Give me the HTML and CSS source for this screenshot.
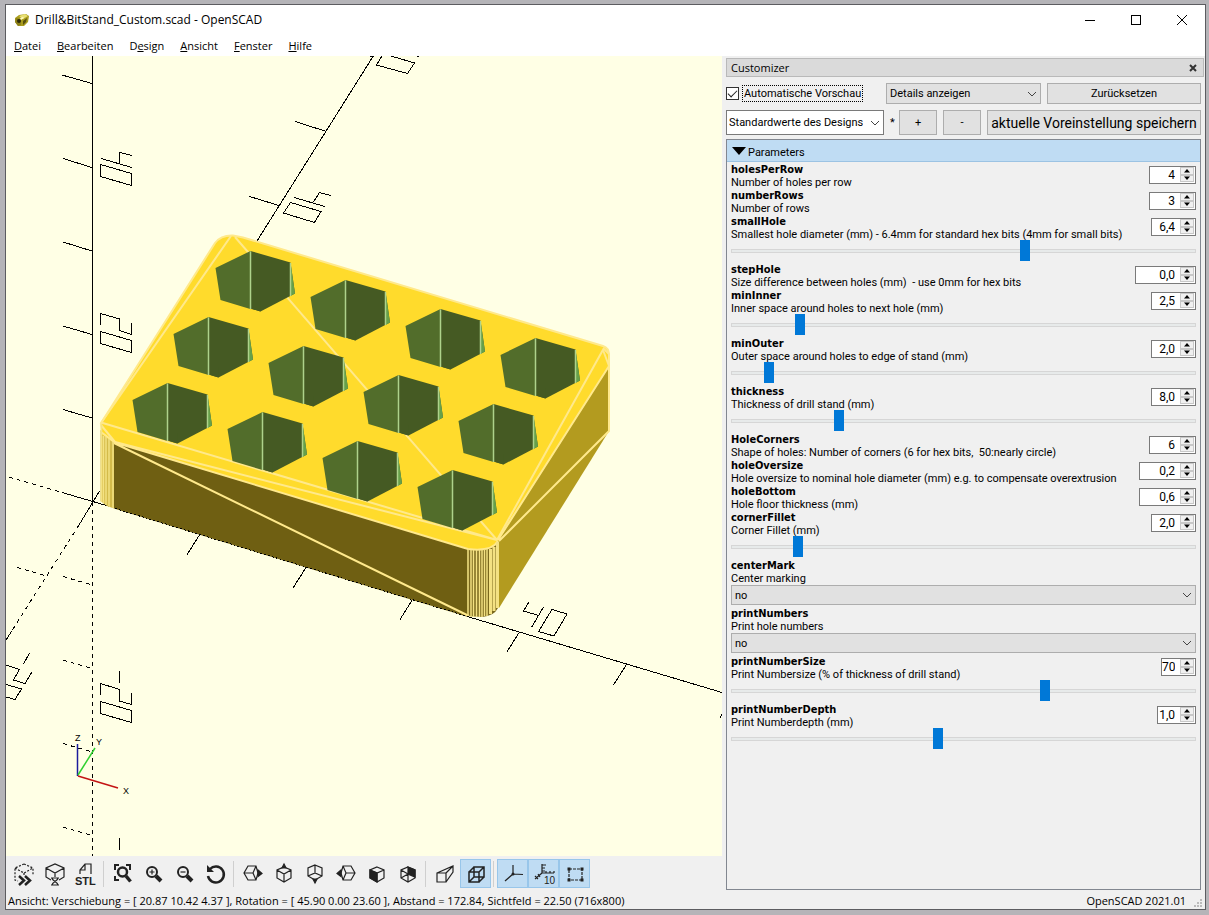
FILE: index.html
```html
<!DOCTYPE html>
<html lang="de">
<head>
<meta charset="utf-8">
<title>Drill&amp;BitStand_Custom.scad - OpenSCAD</title>
<link rel="stylesheet" href="styles.css">
</head>
<body>
<svg class="defs" aria-hidden="true">
  <defs>
    <symbol id="chevron" viewBox="0 0 10 6"><path d="M1 1l4 4 4-4" fill="none" stroke="#444"/></symbol>
    <symbol id="up" viewBox="0 0 6 4"><path d="M3 0l3 3.5H0z"/></symbol>
    <symbol id="down" viewBox="0 0 6 4"><path d="M3 4l3-3.5H0z"/></symbol>
  </defs>
</svg>
<div class="window">
  <header class="titlebar">
    <svg class="app-icon" viewBox="0 0 16 14"><path d="M1 5l4-3 7-1 3 2-1 6-4 4-6 0-3-4z" fill="#a99c1e"/><path d="M5 3l6-2 3 2-5 3z" fill="#e8df72"/><path d="M2 5l4 1 1 6-3 1-3-4z" fill="#8c8018"/><circle cx="5" cy="8" r="2" fill="#2e2a08"/><path d="M9 8l4-3-1 4-3 3z" fill="#57500f"/><path d="M6 5l3-1 1 1-3 2z" fill="#fffbc0"/></svg>
    <h1 class="title">Drill&amp;BitStand_Custom.scad - OpenSCAD</h1>
    <div class="caption-buttons">
      <button class="caption" aria-label="Minimieren"><svg viewBox="0 0 12 12"><path d="M1 6.5h10"/></svg></button>
      <button class="caption" aria-label="Maximieren"><svg viewBox="0 0 12 12"><path d="M1.500 1.500h9v9h-9z"/></svg></button>
      <button class="caption" aria-label="Schließen"><svg viewBox="0 0 12 12"><path d="M1 1l10 10M11 1L1 11" shape-rendering="auto"/></svg></button>
    </div>
  </header>
  <nav class="menubar">
    <a href="#"><u>D</u>atei</a><a href="#"><u>B</u>earbeiten</a><a href="#">D<u>e</u>sign</a><a href="#"><u>A</u>nsicht</a><a href="#"><u>F</u>enster</a><a href="#"><u>H</u>ilfe</a>
  </nav>
  <div class="work">
    <main class="editor">
      <svg class="scene" viewBox="6 56 716 800" preserveAspectRatio="xMinYMin slice" role="img" aria-label="3D-Ansicht">
        <defs>
          <g id="hole">
            <path d="M0 0l40 11.500 4.500 31-34.500 18-10-3z" fill="#455a23"/>
            <path d="M0 0v58l10 3-40-12-5-32z" fill="#526d2b"/>
            <path d="M10 60.500l-10-3V50h10z" fill="#455a23"/>
            <path d="M40 11.500l4.500 31-4.500 2.500z" fill="#67a04a"/>
            <path d="M0 .5v57.500M40 12v33" stroke="#aed28b" stroke-width="1.500"/>
          </g>
        </defs>
        <g class="axis">
          <path d="M92.500 56V502"/>
          <path d="M62 75l30 8.500M63 158.500l29 9M63 242l29 9M63 326l29 8.500M63 409.500l29 8.500"/>
          <path d="M257 241L373 56.500h-3M295 121.500l30 9.500M249.500 196.500l29.500 9"/>
          <path d="M99.500 491L79 525M62 492.500l53 15.500M469 617l253 75.500"/>
          <path d="M199.500 535l-13 20.500M306 567.500l-13 20.500M412.500 599.500l-12.500 20M519.500 632l-13 20.500M626.500 664.500l-13 20.500M722 714.500l-2 3"/>
          <path d="M92.500 502V856" stroke-dasharray="4 4"/>
          <path d="M63 576.500l29 8.500M63 660l29 8.500M63 743.500l29 8.500M63 827l29 8.500M17 567.500l28 8M9 477l53 15.500M79 525L6 640" stroke-dasharray="4 4"/>
          <path d="M100.500 164.500l31 9v12l-31-9zM101 158.500l31 9M119.500 164v-11.500l12.500 3"/>
          <path d="M100.500 324.500v-11l19 5.500v11.500l12 4v-12M100.500 331.500l31 9v12l-31-9z"/>
          <path d="M119.500 671v11.500M100.500 694.500v-11l19 6v11.500l12 3.500v-11.500M100.500 701.500l31 9v12l-31-9zM119.500 838v11.500"/>
          <path d="M29.500 653l-6 11M6 665l13.500 4.500-6 10.500 11.500 3.500 7-11.500M6 684.500l15.500 4.500-6.500 10.500-9-2.500M11.500 631.500L6 640"/>
          <path d="M294 197.500l31 9M313.500 202l6-9.500 11.500 3M290.500 202.500l30.500 9-6.500 11-31-9.500z"/>
          <path d="M382 56l-5.500 9 31 8.500 7-10.500-23.500-7M417 57l2-1"/>
          <path d="M529 602l-5.500 9 15.500 4.500M543.500 607l-12 20.500M552 609.500l15 4.500-13 22-15.500-4.500z"/>
        </g>
        <path d="M114 442L468 548V617L114 508.500z" fill="#6f5f12"/>
        <path d="M497 540L609 362V431L499 608z" fill="#b39b1f"/>
        <path d="M100.500 430L114 441V508.500L107 506 100.500 501z" fill="#d3bb4a"/>
        <path d="M467 547L498 540V608q-4 8-16 9l-15-1z" fill="#7a681c"/>
        <path d="M100.500 424L215 243Q221 235 233 235.500L243 237.500 603 346Q609 348 609.500 355V366L498 541Q494 549 480 550L468 549 114 442.500 101 434z" fill="#ffdb2c"/>
        <g class="edges">
          <path d="M100.500 424L215 243Q221 235 233 235.500L243 237.500 603 346Q609 348 609 355V431L499 541M498 540L609 366"/>
          <path d="M231 236L101 423M235 237L497 540M604 348L497 540M497 540L101 422.500M115 442L497 540M101 425l14 17M609 354l-6-6"/>
          <path d="M101 432L115 442.500 468 549Q492 552 498 541M114 443L469 616"/>
          <path d="M609 366l-6-16"/>
        </g>
        <g class="ribs">
          <path d="M101.500 424V502M103.500 436V503M106 437V505M109 439V507M113 442V508"/>
          <path d="M468 549V616M471 550V617M473.500 550V617M476.500 550V617M479.500 550V617M482 550V617M484.500 549V616M487 549V616"/>
        </g>
        <path d="M490.500 549V614M494 547V611M497.500 542V608" stroke="#f4e283" stroke-width="3"/>
        <g>
          <use href="#hole" x="250.500" y="251"/><use href="#hole" x="345.500" y="280"/><use href="#hole" x="440.500" y="309"/><use href="#hole" x="535.500" y="338"/>
          <use href="#hole" x="208.500" y="317"/><use href="#hole" x="303.500" y="346"/><use href="#hole" x="398.500" y="375"/><use href="#hole" x="493.500" y="404"/>
          <use href="#hole" x="167.500" y="383"/><use href="#hole" x="262.500" y="412"/><use href="#hole" x="357.500" y="441"/><use href="#hole" x="452.500" y="470"/>
        </g>
        <path d="M115 508.500L469 617" class="axis" stroke-dasharray="2 2"/>
        <path d="M77.500 776V744" stroke="#1c1c9c" stroke-width="1.500"/>
        <path d="M78 775L95 748" stroke="#2fd02f" stroke-width="1.500"/>
        <path d="M78 776L118 788" stroke="#c41414" stroke-width="1.500"/>
        <g class="axis-names"><text x="75" y="741">Z</text><text x="96" y="745">Y</text><text x="123" y="794">X</text></g>
      </svg>
      <div class="toolbar" role="toolbar">
        <button class="tool" aria-label="Vorschau"><svg viewBox="0 0 24 24"><path d="M12 2l9 4v7M12 2L3 6v12l3 1M3 6l9 5 9-5M12 11v2" stroke-dasharray="2 1.500"/><path d="M7 14l5 4.500L7 23M13 14l5 4.500-5 4.500" stroke-width="2.500"/></svg></button>
        <button class="tool" aria-label="Rendern"><svg viewBox="0 0 24 24"><path d="M8 18l-5-3V6l9-4 9 4v9l-5 3M3 6l9 5 9-5M12 11v4M8 16h8M8 23h8M9 16c0 3 6 4 6 7M15 16c0 3-6 4-6 7"/></svg></button>
        <button class="tool" aria-label="STL exportieren"><svg viewBox="0 0 24 24"><path d="M6 12V8l5-6h6v10M11 2v6H6"/><text class="stl" x="1" y="23">STL</text></svg></button>
        <span class="sep"></span>
        <button class="tool" aria-label="Alles zeigen"><svg viewBox="0 0 24 24"><path d="M4 8V3h4M15 3h4v5M4 14v4h4" stroke-width="2"/><circle cx="11.500" cy="10" r="4.500" stroke-width="2.500"/><path d="M15 14l4.500 5.500" stroke-width="3.500"/></svg></button>
        <button class="tool" aria-label="Vergrößern"><svg viewBox="0 0 24 24"><circle cx="10" cy="10" r="5" stroke-width="2"/><path d="M14 14l5 5" stroke-width="4"/><path d="M7.500 10h5M10 7.500v5"/></svg></button>
        <button class="tool" aria-label="Verkleinern"><svg viewBox="0 0 24 24"><circle cx="10" cy="10" r="5" stroke-width="2"/><path d="M14 14l5 5" stroke-width="4"/><path d="M7.500 10h5"/></svg></button>
        <button class="tool" aria-label="Ansicht zurücksetzen"><svg viewBox="0 0 24 24"><path d="M6 7a8 8 0 1 1-2 7" stroke-width="2.500"/><path d="M3 3v7h7z" fill="#222" stroke="none"/></svg></button>
        <span class="sep"></span>
        <button class="tool" aria-label="Rechts"><svg viewBox="0 0 24 24"><path d="M7 4h8l2 7-2 7H7l-4-7zM3 11h9l3-7M12 11l3 7"/><path d="M17 8l4 3.500-4 3z" fill="#222"/></svg></button>
        <button class="tool" aria-label="Oben"><svg viewBox="0 0 24 24"><path d="M12 5l7 3v8l-7 4-7-4V8zM5 8l7 4 7-4M12 12v8"/><path d="M12 2l2 4h-4z" fill="#222"/></svg></button>
        <button class="tool" aria-label="Unten"><svg viewBox="0 0 24 24"><path d="M12 3l7 3v8l-7 4-7-4V6zM5 14l7-3 7 3M12 3v8"/><path d="M12 21l2-4h-4z" fill="#222"/></svg></button>
        <button class="tool" aria-label="Links"><svg viewBox="0 0 24 24"><path d="M17 4H9l-2 7 2 7h8l4-7zM21 11h-9L9 4M12 11l-3 7"/><path d="M7 8l-4 3.500 4 3z" fill="#222"/></svg></button>
        <button class="tool" aria-label="Vorne"><svg viewBox="0 0 24 24"><path d="M12 5l7 3v8l-7 4-7-4V8zM5 8l7 3 7-3M12 11v9"/><path d="M5 8l7 3v9l-7-4z" fill="#222"/></svg></button>
        <button class="tool" aria-label="Hinten"><svg viewBox="0 0 24 24"><path d="M12 5l7 3v8l-7 4-7-4V8zM5 8l7 4M12 12v8M5 16l7-4"/><path d="M12 5l7 3v7l-7-3z" fill="#222"/></svg></button>
        <span class="sep"></span>
        <button class="tool" aria-label="Perspektivisch"><svg viewBox="0 0 24 24"><path d="M4 11h9v9H4zM4 11L20 4v6l-7 10M20 4l-7 7"/></svg></button>
        <button class="tool on" aria-label="Orthogonal" aria-pressed="true"><svg viewBox="0 0 24 24"><path d="M5 10h10v10H5zM10 5h10v10H10zM5 10l5-5M15 10l5-5M5 20l5-5M15 20l5-5" stroke-width="1.500"/></svg></button>
        <span class="sep"></span>
        <button class="tool on" aria-label="Achsen" aria-pressed="true"><svg viewBox="0 0 24 24"><path d="M12 3v9l10 .5M12 12l-8 7"/><circle cx="12" cy="12" r="1.500" fill="#222" stroke="none"/></svg></button>
        <button class="tool on" aria-label="Skala" aria-pressed="true"><svg viewBox="0 0 24 24"><path d="M10 2v9h12M10 3h4M10 6h3M10 9h3M14 11V9M18 11V9M22 11V9M10 11l-7 6M3 14l3 3M6 12l2 3"/><text class="ten" x="12" y="22">10</text></svg></button>
        <button class="tool on" aria-label="Kanten" aria-pressed="true"><svg viewBox="0 0 24 24"><path d="M6 7h13v11H6z" stroke-dasharray="3 1"/><path d="M4.500 5.500h3v3h-3zM17.500 5.500h3v3h-3zM4.500 16.500h3v3h-3zM17.500 16.500h3v3h-3z" fill="#222" stroke="none"/></svg></button>
      </div>
    </main>
    <aside class="dock">
      <div class="dock-title"><span>Customizer</span><button class="close" aria-label="Schließen"><svg viewBox="0 0 8 8"><path d="M1 1l6 6M7 1L1 7" stroke="#333" stroke-width="2"/></svg></button></div>
      <div class="row row-top">
        <label class="auto"><input type="checkbox" checked><span>Automatische Vorschau</span></label>
        <span class="combo details"><select aria-label="Details"><option>Details anzeigen</option></select><svg><use href="#chevron"/></svg></span>
        <button class="push reset">Zurücksetzen</button>
      </div>
      <div class="row row-preset">
        <span class="combo preset"><select aria-label="Voreinstellung"><option>Standardwerte des Designs</option></select><svg><use href="#chevron"/></svg></span>
        <span class="star">*</span>
        <button class="push small">+</button>
        <button class="push small">-</button>
        <button class="push save">aktuelle Voreinstellung speichern</button>
      </div>
      <section class="params">
        <button class="group"><svg viewBox="0 0 14 8"><path d="M0 0h14L7 8z"/></svg>Parameters</button>
        <div class="list" id="list"></div>
      </section>
    </aside>
  </div>
  <footer class="status"><span>Ansicht: Verschiebung = [ 20.87 10.42 4.37 ], Rotation = [ 45.90 0.00 23.60 ], Abstand = 172.84, Sichtfeld = 22.50 (716x800)</span><span class="version">OpenSCAD 2021.01</span><svg class="grip" viewBox="0 0 10 10"><path d="M7 1h2v2H7zM7 4h2v2H7zM7 7h2v2H7zM4 4h2v2H4zM4 7h2v2H4zM1 7h2v2H1z" fill="#bbb"/></svg></footer>
</div>
<script src="params.js"></script>
</body>
</html>
```

FILE: params.js
```js
// box: width class of the number field; slider: handle position in percent of its travel
const params = [
  { name: "holesPerRow", text: "Number of holes per row", value: "4", box: "int" },
  { name: "numberRows", text: "Number of rows", value: "3", box: "int" },
  { name: "smallHole", text: "Smallest hole diameter (mm) - 6.4mm for standard hex bits (4mm for small bits)", value: "6,4", box: "dec", slider: 63.5 },
  { name: "stepHole", text: "Size difference between holes (mm)\u00a0 - use 0mm for hex bits", value: "0,0", box: "wide" },
  { name: "minInner", text: "Inner space around holes to next hole (mm)", value: "2,5", box: "dec", slider: 13.8 },
  { name: "minOuter", text: "Outer space around holes to edge of stand (mm)", value: "2,0", box: "dec", slider: 7 },
  { name: "thickness", text: "Thickness of drill stand (mm)", value: "8,0", box: "dec", slider: 22.6 },
  { name: "HoleCorners", text: "Shape of holes: Number of corners (6 for hex bits,\u00a0 50:nearly circle)", value: "6", box: "int" },
  { name: "holeOversize", text: "Hole oversize to nominal hole diameter (mm) e.g. to compensate overextrusion", value: "0,2", box: "mid" },
  { name: "holeBottom", text: "Hole floor thickness (mm)", value: "0,6", box: "mid" },
  { name: "cornerFillet", text: "Corner Fillet (mm)", value: "2,0", box: "dec", slider: 13.4 },
  { name: "centerMark", text: "Center marking", choice: "no" },
  { name: "printNumbers", text: "Print hole numbers", choice: "no" },
  { name: "printNumberSize", text: "Print Numbersize (% of thickness of drill stand)", value: "70", box: "tiny", slider: 68.1 },
  { name: "printNumberDepth", text: "Print Numberdepth (mm)", value: "1,0", box: "short", slider: 44.4 }
];

document.getElementById("list").innerHTML = params.map(p => `
  <div class="param">
    <div class="head">
      <label for="${p.name}"><b>${p.name}</b><span>${p.text}</span></label>
      ${p.box ? `<span class="spin ${p.box}"><input id="${p.name}" type="text" value="${p.value}"><span class="steps"><button aria-label="mehr"><svg><use href="#up"/></svg></button><button aria-label="weniger"><svg><use href="#down"/></svg></button></span></span>` : ""}
    </div>
    ${p.slider ? `<input class="slider" type="range" min="0" max="100" step="0.1" value="${p.slider}" aria-label="${p.name}">` : ""}
    ${p.choice ? `<span class="combo choice"><select id="${p.name}"><option>${p.choice}</option></select><svg><use href="#chevron"/></svg></span>` : ""}
  </div>`).join("");
```

FILE: styles.css
```css
* { box-sizing: border-box; }
body {
  margin: 0;
  height: 100vh;
  padding: 4px 3px 5px 5px;
  background: #b5b4b8;
  font: 11px/13px Roboto, "Open Sans", sans-serif;
  color: #000;
}
button, select, input { font: inherit; color: inherit; margin: 0; padding: 0; border-radius: 0; }
svg { display: block; }
.defs { position: absolute; width: 0; height: 0; }
.window { height: 100%; display: flex; flex-direction: column; border: 1px solid #5c5c60; background: #f0f0f0; }

.titlebar { display: flex; align-items: center; height: 30px; flex: none; background: #fff; padding-left: 8px; }
.app-icon { width: 16px; height: 14px; }
.title { flex: 1; margin: 0 0 0 5px; font: 12px/16px "Open Sans", sans-serif; }
.caption-buttons { display: flex; }
.caption { width: 46px; height: 30px; border: 0; background: none; display: grid; place-items: center; }
.caption svg { width: 12px; height: 12px; fill: none; stroke: #000; shape-rendering: crispEdges; }

.menubar { display: flex; gap: 16px; height: 21px; flex: none; padding: 2px 8px 0; background: #fff; font: 11px/18px "Open Sans", sans-serif; }
.menubar a { color: #000; text-decoration: none; }

.work { flex: 1; display: flex; min-height: 0; }
.editor { flex: 1; min-width: 0; display: flex; flex-direction: column; }
.scene { flex: 1; width: 100%; min-height: 0; background: #ffffe5; }
.axis { fill: none; stroke: #000; shape-rendering: crispEdges; }
.edges { fill: none; stroke: #ffe98c; stroke-width: 2; }
.ribs { stroke: #f4e283; stroke-width: 1.5; }
.axis-names { font: 9px "Liberation Sans", sans-serif; }

.toolbar { display: flex; align-items: center; height: 35px; flex: none; padding-left: 2px; }
.tool { width: 31px; height: 29px; flex: none; border: 1px solid transparent; background: none; display: grid; place-items: center; }
.tool.on { background: #bfdcf3; border-color: #98c6ea; }
.tool svg { width: 24px; height: 24px; fill: none; stroke: #222; stroke-width: 1.2; }
.tool text { fill: #222; stroke: none; }
.stl { font: bold 11px "Liberation Sans", sans-serif; }
.ten { font: 10px "Liberation Sans", sans-serif; }
.sep { width: 6px; flex: none; height: 26px; background: linear-gradient(#cfcfcf, #cfcfcf) 2px 0 / 1px 100% no-repeat; }

.dock { width: 483px; flex: none; display: flex; flex-direction: column; padding: 2px 4px 1px; }
.dock-title { display: flex; align-items: center; justify-content: space-between; height: 19px; margin-right: -3px; padding: 0 6px 0 4px; border: 1px solid #b9b9b9; background: #dadada; font-family: "Open Sans", sans-serif; }
.close { border: 0; background: none; }
.close svg { width: 8px; height: 8px; }
.row { display: flex; align-items: center; gap: 6px; }
.row-top { margin-top: 6px; height: 21px; }
.row-preset { margin-top: 6px; height: 25px; }
.auto { display: flex; align-items: center; gap: 3px; flex: 1; }
.auto input { appearance: none; width: 13px; height: 13px; border: 1px solid #333; background: #fff; display: grid; place-items: center; }
.auto input:checked::before { content: ""; width: 8px; height: 4px; border: solid #222; border-width: 0 0 1px 1px; transform: rotate(-45deg); margin-bottom: 3px; }
.auto span { border: 1px dotted #000; padding: 1px; }
.combo { position: relative; display: block; flex: none; }
.combo select { appearance: none; display: block; width: 100%; height: 100%; padding: 0 20px 0 3px; border: 1px solid #adadad; background: #e1e1e1; }
.combo svg { position: absolute; right: 4px; top: 0; bottom: 0; margin: auto; width: 10px; height: 6px; pointer-events: none; }
.details { width: 155px; height: 21px; }
.preset { width: 158px; height: 25px; }
.preset select { background: #fff; border-color: #7a7a7a; padding-left: 2px; }
.star { width: 3px; flex: none; }
.push { border: 1px solid #adadad; background: #e1e1e1; white-space: nowrap; }
.reset { width: 154px; height: 21px; }
.small { width: 38px; height: 25px; flex: none; }
.save { flex: 1; min-width: 0; height: 25px; font-size: 14px; line-height: 18px; }

.params { flex: 1; margin-top: 4px; border: 1px solid #828790; min-height: 0; overflow: hidden; }
.group { display: flex; align-items: center; gap: 2px; width: 100%; height: 22px; padding: 4px 0 0 5px; border: 0; border-bottom: 1px solid #9cc3e3; background: #bfdcf3; text-align: left; }
.group svg { width: 14px; height: 8px; margin-bottom: 4px; }
.list { padding: 1px 4px 0 4px; }
.head { display: flex; justify-content: space-between; height: 26px; }
.head label { display: block; white-space: nowrap; }
.head label b, .head label span { display: block; }
.head b { font: bold 11px/13px "DejaVu Sans Condensed", "DejaVu Sans", sans-serif; }
.spin { display: flex; height: 18px; margin-top: 3px; border: 1px solid #7a7a7a; background: #fff; }
.spin input { flex: 1; width: 0; border: 0; background: none; text-align: right; padding: 1px 5px 0 0; font-size: 12px; }
.steps { display: flex; flex-direction: column; width: 15px; padding: 0 1px 1px 0; }
.steps button { flex: 1; border: 1px solid #c8c8c8; background: #f0f0f0; display: grid; place-items: center; }
.steps svg { width: 6px; height: 4px; }
.int { width: 47px; } .dec { width: 45px; } .wide { width: 61px; } .mid { width: 57px; } .tiny { width: 35px; } .short { width: 39px; }
.slider { appearance: none; display: block; width: 100%; height: 21px; margin: -1px 0 2px; background: none; }
.slider::-webkit-slider-runnable-track { height: 4px; border: 1px solid #d6d6d6; background: #e7eaea; }
.slider::-webkit-slider-thumb { appearance: none; width: 10px; height: 21px; margin-top: -10px; background: #0078d7; }
.choice { height: 20px; margin-bottom: 2px; }

.status { display: flex; align-items: center; height: 18px; flex: none; padding: 1px 2px 0 2px; font-family: "Open Sans", sans-serif; }
.version { margin-left: auto; }
.grip { width: 10px; height: 10px; margin: 4px 0 0 7px; }
```
